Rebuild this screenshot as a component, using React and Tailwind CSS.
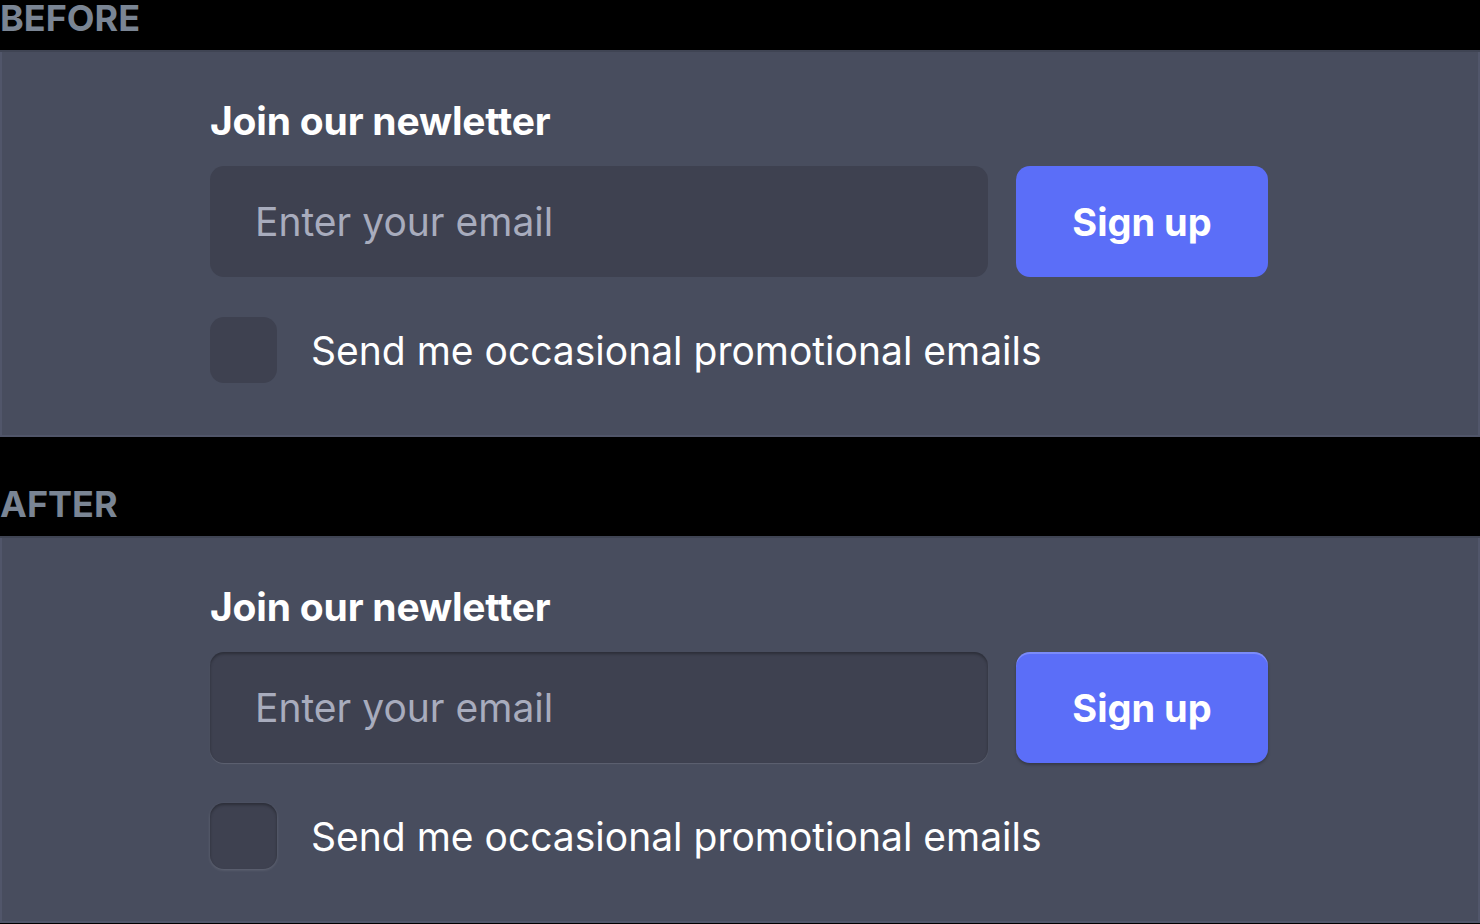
import React from 'react';

const font = { fontFamily: 'Inter, "Noto Sans", sans-serif' };

function Newsletter({ after }) {
  return (
    <div className="border-2 border-t-0 border-[#51566a] bg-[#484d5e] pl-[208px] pt-[49px] pb-[52px]">
      <h2 className="text-[39px] leading-none font-bold text-white tracking-[-0.005em] mb-[26px]">Join our newletter</h2>
      <div className="flex gap-[28px]">
        <input
          type="email"
          placeholder="Enter your email"
          className={
            'w-[778px] h-[111px] rounded-[14px] bg-[#3e4150] px-[45px] text-[39px] leading-none text-[#a8acbd] placeholder:text-[#a8acbd] outline-none ' +
            (after ? 'shadow-[inset_0_2px_3px_rgba(0,0,0,0.3),0_1px_1px_rgba(255,255,255,0.12)]' : '')
          }
        />
        <button
          className={
            'w-[252px] h-[111px] rounded-[14px] bg-[#5b6ef8] text-[38px] leading-none font-bold text-white ' +
            (after ? 'shadow-[inset_0_2px_0_rgba(255,255,255,0.2),0_2px_3px_rgba(0,0,0,0.25)]' : '')
          }
        >
          Sign up
        </button>
      </div>
      <label className="flex items-center gap-[34px] mt-[40px]">
        <span
          className={
            'w-[67px] h-[66px] rounded-[14px] bg-[#3e4150] ' +
            (after ? 'shadow-[inset_0_2px_3px_rgba(0,0,0,0.3),0_1px_3px_rgba(255,255,255,0.15)]' : '')
          }
        />
        <span className="text-[39px] leading-none text-white">Send me occasional promotional emails</span>
      </label>
    </div>
  );
}

export default function App() {
  return (
    <div className="w-[1480px] h-[924px] bg-black overflow-hidden" style={font}>
      <div className="h-[50px] text-[36px] leading-none font-bold text-[#7a8594]">BEFORE</div>
      <div className="border-t-2 border-[#3f4453]">
        <Newsletter />
      </div>
      <div className="h-[99px] flex items-end pb-[14px] text-[36px] leading-none font-bold text-[#7a8594]">AFTER</div>
      <div className="border-t-2 border-[#3f4453]">
        <Newsletter after />
      </div>
    </div>
  );
}
